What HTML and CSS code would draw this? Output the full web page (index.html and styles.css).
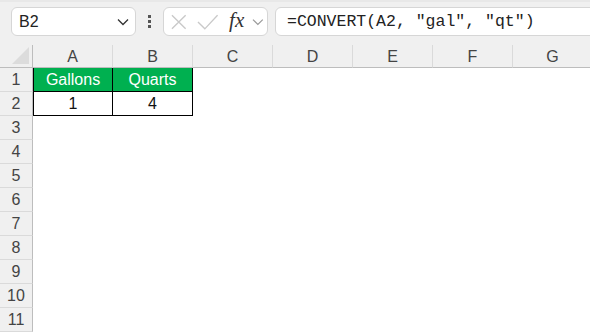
FILE: index.html
```html
<!DOCTYPE html>
<html lang="en">
<head>
  <meta charset="UTF-8" />
  <title>CONVERT gallons to quarts</title>
  <link rel="stylesheet" href="styles.css">
</head>
<body>
  <div class="toolbar">
    <div class="namebox">
      <span>B2</span>
      <svg class="chev" width="12" height="8" viewBox="0 0 12 8"><path d="M1 1.5 L6 6.5 L11 1.5" fill="none" stroke="#333" stroke-width="1.3"/></svg>
    </div>
    <div class="kebab"><i></i><i></i><i></i></div>
    <div class="fxbox">
      <svg width="18" height="18" viewBox="0 0 18 18"><path d="M2 2 L16 16 M16 2 L2 16" stroke="#c9c9c9" stroke-width="1.4" fill="none"/></svg>
      <svg width="22" height="16" viewBox="0 0 22 16"><path d="M1 8 L8 15 L21 1" stroke="#c9c9c9" stroke-width="1.4" fill="none"/></svg>
      <span class="fx">fx</span>
      <svg class="chev" width="12" height="8" viewBox="0 0 12 8"><path d="M1 1.5 L6 6.5 L11 1.5" fill="none" stroke="#999" stroke-width="1.2"/></svg>
    </div>
    <div class="formula">=CONVERT(A2, "gal", "qt")</div>
  </div>

  <div class="sheet">
    <div class="corner"><span class="tri"></span></div>
    <div class="colhead">A</div>
    <div class="colhead">B</div>
    <div class="colhead">C</div>
    <div class="colhead">D</div>
    <div class="colhead">E</div>
    <div class="colhead">F</div>
    <div class="colhead">G</div>

    <div class="rowhead">1</div>
    <div class="cell head first">Gallons</div>
    <div class="cell head">Quarts</div>
    <div class="cell"></div><div class="cell"></div><div class="cell"></div><div class="cell"></div><div class="cell"></div>

    <div class="rowhead">2</div>
    <div class="cell data first">1</div>
    <div class="cell data">4</div>
    <div class="cell"></div><div class="cell"></div><div class="cell"></div><div class="cell"></div><div class="cell"></div>

    <div class="rowhead">3</div><div class="blank"></div>
    <div class="rowhead">4</div><div class="blank"></div>
    <div class="rowhead">5</div><div class="blank"></div>
    <div class="rowhead">6</div><div class="blank"></div>
    <div class="rowhead">7</div><div class="blank"></div>
    <div class="rowhead">8</div><div class="blank"></div>
    <div class="rowhead">9</div><div class="blank"></div>
    <div class="rowhead">10</div><div class="blank"></div>
    <div class="rowhead">11</div><div class="blank"></div>
  </div>
</body>
</html>
```

FILE: styles.css
```css
*, *::before, *::after { box-sizing: border-box; }

body {
  margin: 0;
  background: #ffffff;
  font-family: 'Liberation Sans', Arial, sans-serif;
  color: #222;
  overflow: hidden;
}

.toolbar {
  height: 45px;
  background: #f0f0f0;
  display: flex;
  align-items: flex-start;
  padding: 7px 0 0 11px;
  border-top: 2px solid #e8e8e8;
}

.namebox {
  width: 125px;
  height: 29px;
  margin-top: -2px;
  background: #fff;
  border: 1px solid #d6d6d6;
  border-radius: 6px;
  display: flex;
  align-items: center;
  justify-content: space-between;
  padding: 0 6px 0 7px;
  font-size: 16px;
  color: #222;
}

.kebab {
  width: 27px;
  height: 29px;
  margin-top: -2px;
  display: flex;
  flex-direction: column;
  align-items: center;
  justify-content: center;
  gap: 2px;
}

.kebab i {
  display: block;
  width: 3px;
  height: 3px;
  background: #555;
}

.fxbox {
  width: 105px;
  height: 29px;
  margin-top: -2px;
  background: #fff;
  border: 1px solid #d6d6d6;
  border-radius: 6px;
  display: flex;
  align-items: center;
  gap: 9px;
  padding: 0 3px 0 6px;
}

.fx {
  font-family: 'Liberation Serif', 'DejaVu Serif', serif;
  font-style: italic;
  font-size: 21px;
  color: #333;
  margin: -3px 0 0 2px;
}

.fxbox .chev { margin-left: -1px; }

.formula {
  flex: 1;
  height: 29px;
  margin: -2px -10px 0 7px;
  background: #fff;
  border: 1px solid #d6d6d6;
  border-radius: 6px;
  display: flex;
  align-items: center;
  padding-left: 11px;
  font-family: 'Liberation Mono', 'DejaVu Sans Mono', monospace;
  font-size: 16.5px;
  color: #222;
}

.sheet {
  display: grid;
  grid-template-columns: 33px repeat(7, 80px);
  grid-template-rows: 23px;
  grid-auto-rows: 24px;
  width: 593px;
}

.corner {
  background: #f0f0f0;
  border-right: 1px solid #bdbdbd;
  border-bottom: 1px solid #bdbdbd;
  position: relative;
}

.tri {
  position: absolute;
  right: 3px;
  bottom: 3px;
  width: 0;
  height: 0;
  border-left: 17px solid transparent;
  border-bottom: 17px solid #dcdcdc;
}

.colhead {
  background: #f0f0f0;
  border-right: 1px solid #dadada;
  border-bottom: 1px solid #bdbdbd;
  display: flex;
  align-items: center;
  justify-content: center;
  font-size: 16px;
  color: #444;
  padding-top: 2px;
}

.rowhead {
  background: #f0f0f0;
  border-right: 1px solid #bdbdbd;
  border-bottom: 1px solid #dadada;
  display: flex;
  align-items: center;
  justify-content: center;
  font-size: 16px;
  color: #444;
}

.cell {
  background: #fff;
  display: flex;
  align-items: center;
  justify-content: center;
  font-size: 16px;
}

.cell.head {
  background: #00b050;
  color: #fff;
  border-right: 1px solid #000;
  border-bottom: 1px solid #000;
}

.cell.data {
  color: #111;
  border-right: 1px solid #000;
  border-bottom: 1px solid #000;
}

.cell.first { border-left: 1px solid #000; }

.blank {
  grid-column: span 7;
  background: #fff;
}
```
